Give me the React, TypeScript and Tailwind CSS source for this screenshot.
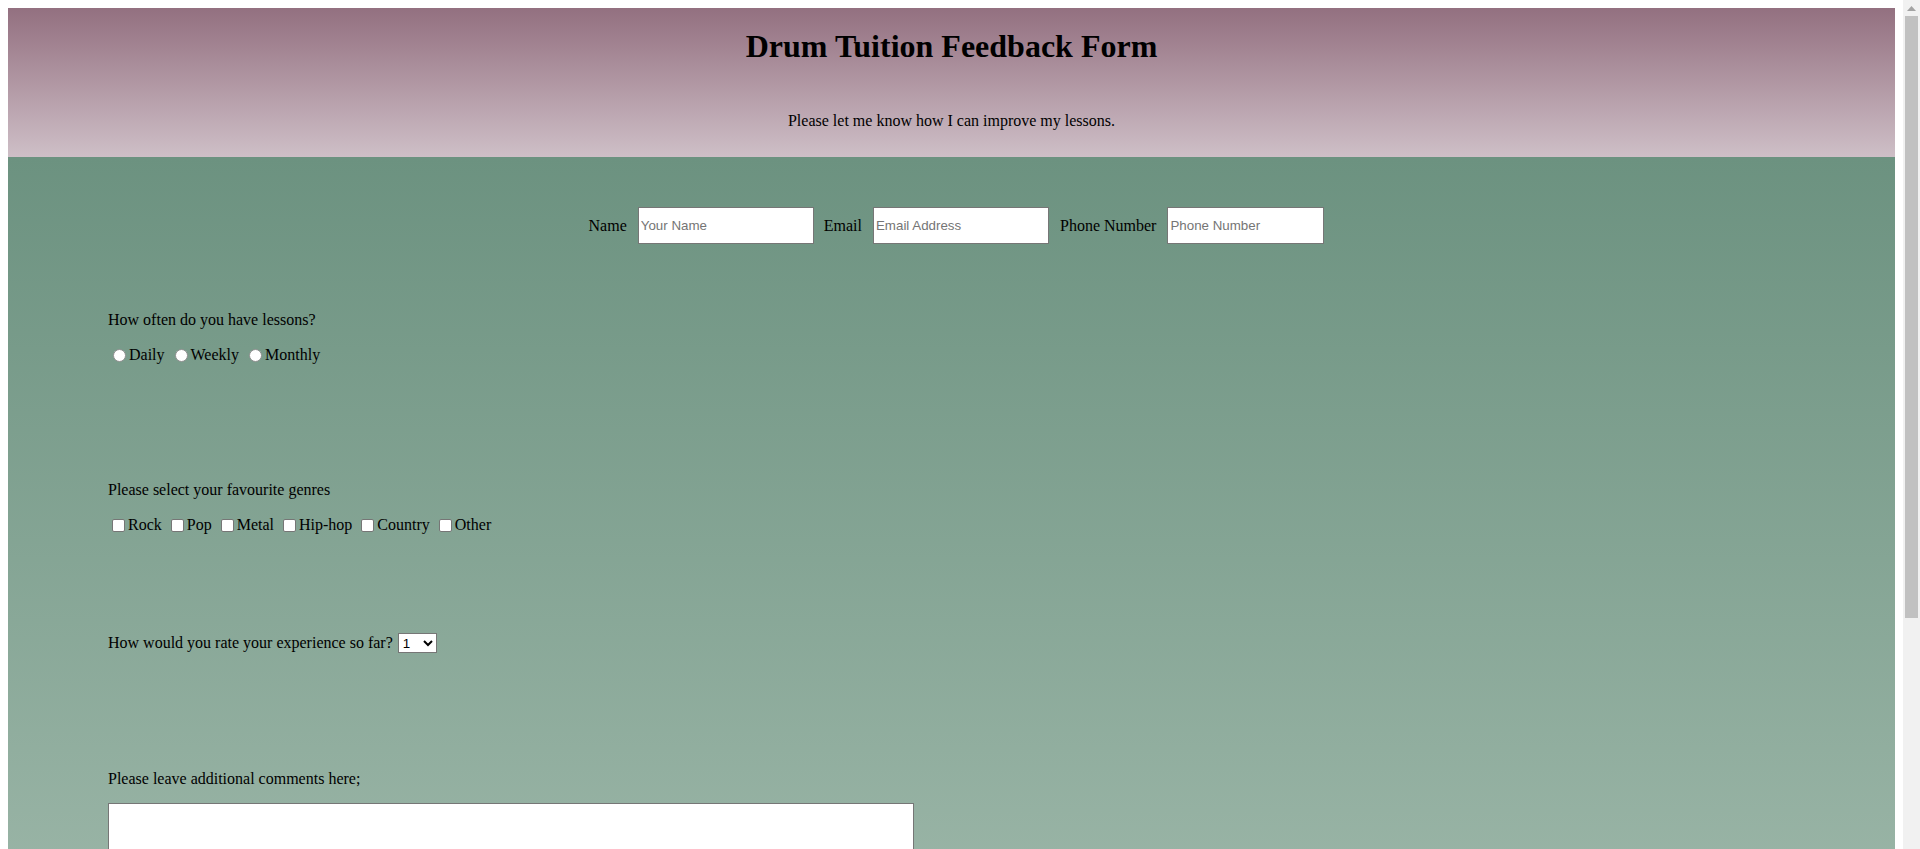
export default function App() {
  const inputCls =
    "h-[37px] border border-[#767676] bg-white px-[2px] font-['Liberation_Sans',Arial,sans-serif] text-[13.33px] text-black placeholder:text-[#757575] outline-none";
  const radioCls =
    "appearance-none w-[13px] h-[13px] rounded-full border border-[#8f8f8f] bg-white checked:border-[4px] checked:border-[#0075ff]";
  const boxCls =
    "appearance-none w-[13px] h-[13px] rounded-[2px] border border-[#767676] bg-white checked:bg-[#0075ff]";
  return (
    <div className="h-screen flex overflow-hidden bg-white">
      <div className="flex-1 min-w-0 overflow-hidden">
        <div className="p-2 font-['Liberation_Serif','Times_New_Roman',serif] text-[16px] text-black">
          <header className="h-[149px] flex flex-col items-center bg-linear-to-b from-[#937080] to-[#cebfc7]">
            <h1 className="mt-[20px] text-[32px] leading-[37px] font-bold">Drum Tuition Feedback Form</h1>
            <p className="mt-[47px] leading-[18px]">Please let me know how I can improve my lessons.</p>
          </header>
          <main className="h-[984px] bg-linear-to-b from-[#6c9280] to-[#aac1b4] pt-[50px]">
            <div className="flex justify-center items-center h-[37px] pl-[10px]">
              <label className="leading-[18px] mr-[11px]">Name</label>
              <input className={inputCls + " w-[176px]"} placeholder="Your Name" />
              <label className="leading-[18px] ml-[10px] mr-[11px]">Email</label>
              <input className={inputCls + " w-[176px]"} placeholder="Email Address" />
              <label className="leading-[18px] ml-[11px] mr-[11px]">Phone Number</label>
              <input className={inputCls + " w-[157px]"} placeholder="Phone Number" />
            </div>
            <div className="pl-[100px]">
              <p className="mt-[67px] leading-[18px]">How often do you have lessons?</p>
              <div className="mt-[17px] flex items-center h-[18px] leading-[18px]">
                <input type="radio" name="freq" className={radioCls + " ml-[5px] mr-[3px]"} />
                <span>Daily</span>
                <input type="radio" name="freq" className={radioCls + " ml-[10px] mr-[3px]"} />
                <span>Weekly</span>
                <input type="radio" name="freq" className={radioCls + " ml-[10px] mr-[3px]"} />
                <span>Monthly</span>
              </div>

              <p className="mt-[117px] leading-[18px]">Please select your favourite genres</p>
              <div className="mt-[17px] flex items-center h-[18px] leading-[18px]">
                <input type="checkbox" className={boxCls + " ml-[4px] mr-[3px]"} />
                <span>Rock</span>
                <input type="checkbox" className={boxCls + " ml-[9px] mr-[3px]"} />
                <span>Pop</span>
                <input type="checkbox" className={boxCls + " ml-[9px] mr-[3px]"} />
                <span>Metal</span>
                <input type="checkbox" className={boxCls + " ml-[9px] mr-[3px]"} />
                <span>Hip-hop</span>
                <input type="checkbox" className={boxCls + " ml-[9px] mr-[3px]"} />
                <span>Country</span>
                <input type="checkbox" className={boxCls + " ml-[9px] mr-[3px]"} />
                <span>Other</span>
              </div>

              <div className="mt-[99px] flex items-center h-[20px] leading-[18px]">
                <span>How would you rate your experience so far?</span>
                <select className="ml-[5px] w-[39px] h-[20px] border border-[#767676] bg-white font-['Liberation_Sans',Arial,sans-serif] text-[13.33px] text-black">
                  <option>1</option>
                  <option>2</option>
                  <option>3</option>
                  <option>4</option>
                  <option>5</option>
                </select>
              </div>

              <p className="mt-[117px] leading-[18px]">Please leave additional comments here;</p>
              <textarea className="mt-[15px] block w-[806px] h-[250px] border border-[#767676] bg-white font-['Liberation_Mono',monospace] text-[13.33px] outline-none resize" />
              <button className="mt-[20px] border border-[#767676] bg-[#efefef] px-[6px] py-[1px] font-['Liberation_Sans',Arial,sans-serif] text-[13.33px]">
                Submit
              </button>
            </div>
          </main>
        </div>
      </div>
      <div className="w-[17px] shrink-0 bg-[#f1f1f1] flex flex-col items-center">
        <div className="h-[16px] w-full flex items-center justify-center">
          <svg width="9" height="5" viewBox="0 0 9 5">
            <path d="M4.5 0 L9 5 L0 5 Z" fill="#a3a3a3" />
          </svg>
        </div>
        <div className="w-[13px] h-[602px] bg-[#c1c1c1]" />
      </div>
    </div>
  );
}
